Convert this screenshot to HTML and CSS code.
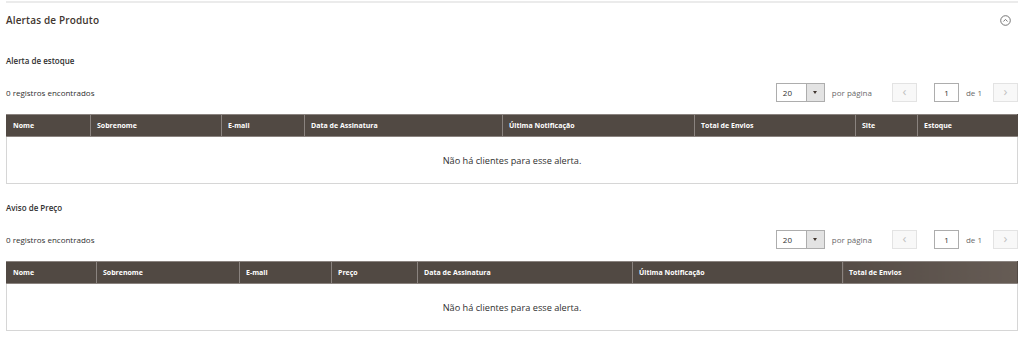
FILE: index.html
```html
<!DOCTYPE html>
<html lang="pt-BR">
<head>
  <meta charset="UTF-8" />
  <meta name="viewport" content="width=device-width, initial-scale=1.0"/>
  <title>Alertas de Produto</title>
  <link rel="stylesheet" href="styles.css">
</head>
<body>

  <div class="fieldset">
    <div class="fieldset-title">
      <span>Alertas de Produto</span>
      <svg class="toggle" width="11" height="11" viewBox="0 0 11 11">
        <circle cx="5.5" cy="5.5" r="4.8" fill="none" stroke="#666" stroke-width="0.9"/>
        <path d="M3.4 6.5 L5.5 4.4 L7.6 6.5" fill="none" stroke="#666" stroke-width="0.9"/>
      </svg>
    </div>

    <h3 class="grid-title">Alerta de estoque</h3>

    <div class="toolbar">
      <div class="records">0 registros encontrados</div>
      <div class="pager">
        <div class="limiter">
          <span class="limiter-value">20</span>
          <span class="limiter-btn"><span class="caret"></span></span>
        </div>
        <span class="per-page">por página</span>
        <span class="page-btn prev">&lsaquo;</span>
        <span class="page-input">1</span>
        <span class="page-total">de 1</span>
        <span class="page-btn next">&rsaquo;</span>
      </div>
    </div>

    <table class="grid grid-stock">
      <thead>
        <tr>
          <th>Nome</th>
          <th>Sobrenome</th>
          <th>E-mail</th>
          <th>Data de Assinatura</th>
          <th>Última Notificação</th>
          <th>Total de Envios</th>
          <th>Site</th>
          <th>Estoque</th>
        </tr>
      </thead>
      <tbody>
        <tr><td colspan="8" class="empty">Não há clientes para esse alerta.</td></tr>
      </tbody>
    </table>

    <h3 class="grid-title">Aviso de Preço</h3>

    <div class="toolbar">
      <div class="records">0 registros encontrados</div>
      <div class="pager">
        <div class="limiter">
          <span class="limiter-value">20</span>
          <span class="limiter-btn"><span class="caret"></span></span>
        </div>
        <span class="per-page">por página</span>
        <span class="page-btn prev">&lsaquo;</span>
        <span class="page-input">1</span>
        <span class="page-total">de 1</span>
        <span class="page-btn next">&rsaquo;</span>
      </div>
    </div>

    <table class="grid grid-price">
      <thead>
        <tr>
          <th>Nome</th>
          <th>Sobrenome</th>
          <th>E-mail</th>
          <th>Preço</th>
          <th>Data de Assinatura</th>
          <th>Última Notificação</th>
          <th>Total de Envios</th>
        </tr>
      </thead>
      <tbody>
        <tr><td colspan="7" class="empty">Não há clientes para esse alerta.</td></tr>
      </tbody>
    </table>
  </div>

</body>
</html>
```

FILE: styles.css
```css
body {
  margin: 0;
  background: #ffffff;
  font-family: "Open Sans", "Liberation Sans", sans-serif;
  color: #303030;
}

.fieldset {
  margin: 1px 6px 0;
  border-top: 2px solid #ebebeb;
}

.fieldset-title {
  height: 34px;
  display: flex;
  align-items: center;
  justify-content: space-between;
  font-size: 10px;
  font-weight: 600;
  letter-spacing: 0.15px;
  color: #41362f;
}

.toggle {
  margin-right: 7px;
  display: block;
}

.grid-title {
  margin: 16px 0 0;
  height: 16px;
  line-height: 16px;
  font-size: 8px;
  font-weight: 600;
  color: #303030;
}

.toolbar {
  margin-top: 14px;
  height: 19px;
  display: flex;
  align-items: center;
  justify-content: space-between;
  font-size: 8px;
  color: #303030;
}

.pager {
  display: flex;
  align-items: center;
  height: 19px;
}

.limiter {
  display: flex;
  height: 19px;
  box-sizing: border-box;
  border: 1px solid #adadad;
  width: 49px;
}

.limiter-value {
  width: 29px;
  padding-left: 6px;
  box-sizing: border-box;
  line-height: 17px;
  background: #ffffff;
}

.limiter-btn {
  flex: 1;
  background: #e3e3e3;
  border-left: 1px solid #adadad;
  display: flex;
  align-items: center;
  justify-content: center;
}

.caret {
  width: 0;
  height: 0;
  border-left: 2.5px solid transparent;
  border-right: 2.5px solid transparent;
  border-top: 3px solid #41362f;
}

.per-page {
  margin-left: 7px;
  color: #6a6a6a;
}

.page-btn {
  width: 25px;
  height: 19px;
  box-sizing: border-box;
  border: 1px solid #e3e3e3;
  background: #f8f8f8;
  color: #c2c2c2;
  font-size: 13px;
  line-height: 15px;
  text-align: center;
}

.prev {
  margin-left: 20px;
}

.next {
  margin-left: 11px;
}

.page-input {
  margin-left: 17px;
  width: 25px;
  height: 19px;
  box-sizing: border-box;
  border: 1px solid #adadad;
  text-align: center;
  line-height: 17px;
}

.page-total {
  margin-left: 7px;
  color: #6a6a6a;
}

.grid {
  width: 100%;
  margin-top: 12px;
  border-collapse: collapse;
  table-layout: fixed;
}

.grid th {
  box-sizing: border-box;
  height: 22px;
  padding: 0 6px;
  background: #514943;
  color: #ffffff;
  font-size: 7px;
  font-weight: 700;
  text-align: left;
  border-left: 1px solid #8a837f;
  border-top: 1px solid #8a837f;
  border-bottom: 1px solid #8a837f;
  white-space: nowrap;
  overflow: hidden;
}

.grid th:first-child {
  border-left-color: #514943;
}

.grid th:last-child {
  border-right: 1px solid #514943;
}

.grid-stock th:nth-child(1) { width: 84px; }
.grid-stock th:nth-child(2) { width: 131px; }
.grid-stock th:nth-child(3) { width: 83px; }
.grid-stock th:nth-child(4) { width: 198px; }
.grid-stock th:nth-child(5) { width: 192px; }
.grid-stock th:nth-child(6) { width: 161px; }
.grid-stock th:nth-child(7) { width: 62px; }

.grid-price th:nth-child(1) { width: 90px; }
.grid-price th:nth-child(2) { width: 143px; }
.grid-price th:nth-child(3) { width: 92px; }
.grid-price th:nth-child(4) { width: 86px; }
.grid-price th:nth-child(5) { width: 215px; }
.grid-price th:nth-child(6) { width: 210px; }

.grid-price th:last-child {
  background: linear-gradient(to right, #554c46, #665c55);
}

.empty {
  box-sizing: border-box;
  height: 47px;
  padding: 0;
  border: 1px solid #d6d6d6;
  border-top: none;
  text-align: center;
  font-size: 9.2px;
  color: #303030;
}
```
